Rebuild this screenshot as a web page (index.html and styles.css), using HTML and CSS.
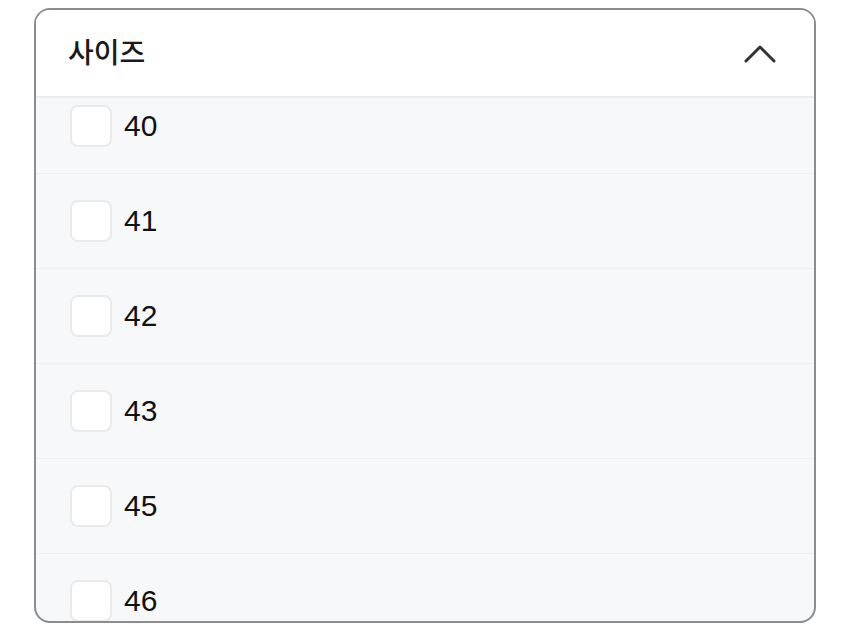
FILE: index.html
```html
<!DOCTYPE html>
<html lang="ko">
<head>
    <meta charset="UTF-8">
    <title>사이즈 필터</title>
    <link rel="stylesheet" href="styles.css">
</head>
<body>

<div class="filter-card">
    <div class="filter-header">
        <span class="filter-title">사이즈</span>
        <svg class="chevron" width="32" height="18" viewBox="0 0 32 18">
            <path d="M2 16 L16 2 L30 16" fill="none" stroke="#333" stroke-width="3" stroke-linecap="round" stroke-linejoin="round"/>
        </svg>
    </div>
    <div class="filter-list">
        <div class="filter-scroll">
            <label class="size-row"><span class="check-box"></span><span class="size-label">40</span></label>
            <label class="size-row"><span class="check-box"></span><span class="size-label">41</span></label>
            <label class="size-row"><span class="check-box"></span><span class="size-label">42</span></label>
            <label class="size-row"><span class="check-box"></span><span class="size-label">43</span></label>
            <label class="size-row"><span class="check-box"></span><span class="size-label">45</span></label>
            <label class="size-row"><span class="check-box"></span><span class="size-label">46</span></label>
        </div>
    </div>
</div>

</body>
</html>
```

FILE: styles.css
```css
body { margin: 0; background: #fff; font-family: "Liberation Sans", "Noto Sans CJK KR", sans-serif; }
.filter-card { margin: 8px 0 0 34px; width: 778px; height: 611px; border: 2px solid #8c8c8c; border-radius: 16px; overflow: hidden; display: flex; flex-direction: column; background: #f7f8fa; }
.filter-header { height: 88px; flex: none; background: #fff; border-bottom: 2px solid #ececee; display: flex; align-items: center; justify-content: space-between; padding: 0 38px 0 32px; box-sizing: border-box; }
.filter-title { font-family: "Noto Sans CJK KR", sans-serif; font-size: 28px; font-weight: 500; color: #1a1a1a; margin-top: -4px; }
.chevron { display: block; margin-top: 2px; }
.filter-list { flex: 1; overflow: hidden; }
.filter-scroll { margin-top: -19px; }
.size-row { height: 94px; display: flex; align-items: center; padding-left: 34px; border-bottom: 1px solid #eeeff1; }
.check-box { width: 38px; height: 38px; border: 2px solid #eaeaea; border-radius: 8px; background: #fff; flex: none; }
.size-label { margin-left: 12px; font-size: 30px; color: #111; }
```
